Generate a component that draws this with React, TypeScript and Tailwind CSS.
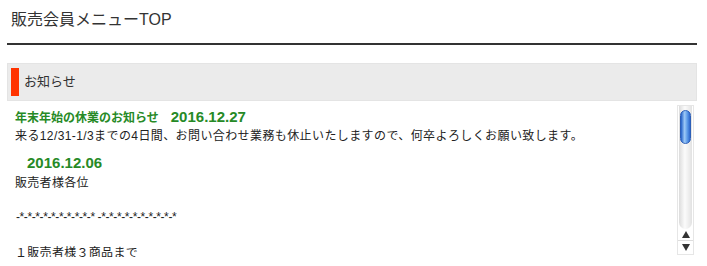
export default function App() {
  return (
    <div className="w-[707px] h-[266px] bg-white overflow-hidden text-[#222] font-['Liberation_Sans','Noto_Sans_CJK_JP',sans-serif]">
      {/* Page title */}
      <div className="px-[7px]">
        <h1 className="pl-[4px] pt-[9px] h-[43px] text-[16px] leading-[22px] text-[#333]">販売会員メニューTOP</h1>
        <div className="h-[2px] bg-[#333] mr-[3px]" />
      </div>

      {/* Section header */}
      <div className="mt-[18px] mx-[7px] mr-[10px] h-[38px] bg-[#ebebeb] border border-[#e4e4e4] flex items-center pl-[3px]">
        <div className="w-[8px] h-[28px] bg-[#ff3300]" />
        <span className="ml-[5px] text-[13px] text-[#333]">お知らせ</span>
      </div>

      {/* Notice list */}
      <div className="ml-[7px] mr-[13px] h-[156px] flex">
        <div className="flex-1 overflow-hidden pl-[8px] pt-[7px] text-[12px]">
          <h3 className="font-bold text-[#268a26] text-[12px] leading-[18px]">
            年末年始の休業のお知らせ{'\u3000'}<span className="text-[15px]">2016.12.27</span>
          </h3>
          <p className="leading-[18px] tracking-[0.4px]">来る12/31-1/3までの4日間、お問い合わせ業務も休止いたしますので、何卒よろしくお願い致します。</p>

          <h3 className="mt-[8px] font-bold text-[#268a26] text-[12px] leading-[20px]">
            {'\u3000'}<span className="text-[15px]">2016.12.06</span>
          </h3>
          <div className="leading-[17px] tracking-[0.3px]">
            <p className="mt-[1px]">販売者様各位</p>
            <p>&nbsp;</p>
            <p className="pl-[1px] tracking-[-0.4px]">-*-*-*-*-*-*-*-*-*-* -*-*-*-*-*-*-*-*-*-*</p>
            <p>&nbsp;</p>
            <p className="pt-[2px]">１販売者様３商品まで</p>
            <p>&nbsp;</p>
          </div>
        </div>

        {/* Aqua style scrollbar */}
        <div className="w-[17px] mt-[4px] mb-[2px] flex flex-col border border-[#e6e6e6] bg-white">
          <div className="flex-1 mx-[1px] rounded-b-full rounded-t-[6px] bg-[linear-gradient(to_right,#dcdcdc,#fbfbfb_45%,#e2e2e2)] pt-[4px] px-[1px]">
            <div className="h-[34px] rounded-full border border-[#2c5fb8] bg-[linear-gradient(to_right,#2360c8,#9cc8f6_40%,#5c9ae8_70%,#2c66cc)]" />
          </div>
          <div className="h-[12px] flex items-center justify-center border-b border-[#ddd]">
            <svg width="8" height="7" viewBox="0 0 8 7"><path d="M4 0 L8 7 L0 7 Z" fill="#333" /></svg>
          </div>
          <div className="h-[13px] flex items-center justify-center">
            <svg width="8" height="7" viewBox="0 0 8 7"><path d="M0 0 L8 0 L4 7 Z" fill="#333" /></svg>
          </div>
        </div>
      </div>
    </div>
  );
}
